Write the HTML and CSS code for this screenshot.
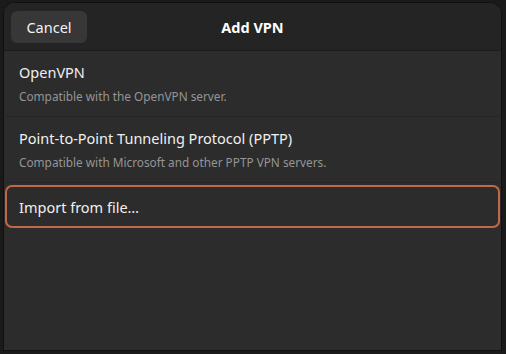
FILE: index.html
```html
<!DOCTYPE html>
<html lang="en">
<head>
    <meta charset="UTF-8">
    <title>Add VPN</title>
    <link rel="stylesheet" href="styles.css">
</head>
<body>
    <div class="dialog">
        <div class="header">
            <button class="cancel-button">Cancel</button>
            <h1>Add VPN</h1>
        </div>
        <div class="list">
            <div class="row">
                <p class="row-title">OpenVPN</p>
                <p class="row-sub">Compatible with the OpenVPN server.</p>
            </div>
            <div class="row">
                <p class="row-title">Point-to-Point Tunneling Protocol (PPTP)</p>
                <p class="row-sub">Compatible with Microsoft and other PPTP VPN servers.</p>
            </div>
            <div class="row import">
                <p class="row-title">Import from file…</p>
            </div>
        </div>
    </div>
</body>
</html>
```

FILE: styles.css
```css
html, body {
    height: 100%;
}
body {
    font-family: "Noto Sans", "Open Sans", sans-serif;
    background-color: #1a1a1a;
    margin: 0;
    padding: 2px 4px 0 3px;
    box-sizing: border-box;
    overflow: hidden;
}
.dialog {
    height: 347px;
    border: 1px solid #101010;
    border-radius: 12px 12px 0 0;
    background-color: #2c2c2c;
    display: flex;
    flex-direction: column;
    overflow: hidden;
}
.header {
    height: 47px;
    background-color: #242424;
    border-bottom: 1px solid #1c1c1c;
    display: flex;
    align-items: center;
    position: relative;
    padding: 0 7px;
}
.cancel-button {
    background-color: #373737;
    color: #f2f2f2;
    border: none;
    border-radius: 6px;
    width: 76px;
    height: 32px;
    font-family: inherit;
    font-size: 14.5px;
    padding: 0;
}
h1 {
    position: absolute;
    left: 0;
    right: 0;
    margin: 0;
    text-align: center;
    font-size: 14.5px;
    font-weight: bold;
    color: #ffffff;
    pointer-events: none;
}
.list {
    flex: 1;
    padding: 0 0 0 1px;
}
.row {
    padding: 10px 14px 10px 14px;
    border-bottom: 1px solid #262626;
}
.row p {
    margin: 0;
}
.row-title {
    font-size: 14.5px;
    color: #f0f0f0;
    line-height: 22px;
}
.row-sub {
    margin-top: 3px !important;
    font-size: 11.8px;
    color: #959595;
    line-height: 20px;
}
.row.import {
    margin: 2px 1px 0 0;
    border: 2px solid #c0694a;
    border-radius: 7px;
    padding: 9px 12px 8px;
}
```
